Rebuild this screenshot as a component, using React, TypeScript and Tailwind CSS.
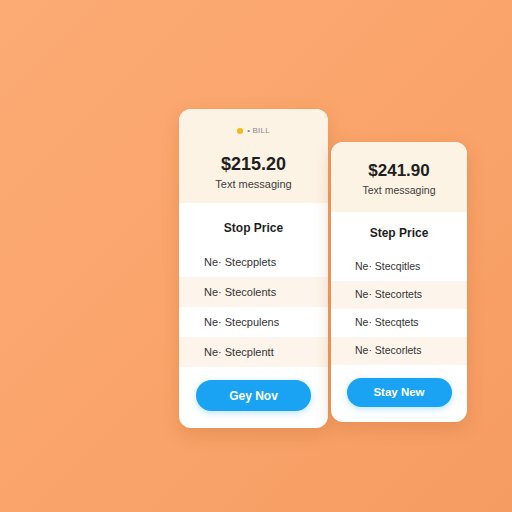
import React from 'react';

type Plan = {
  price: string;
  note: string;
  title: string;
  rows: string[];
  cta: string;
  badge?: boolean;
};

const plans: Plan[] = [
  {
    price: '$215.20',
    note: 'Text messaging',
    title: 'Stop Price',
    rows: ['Ne· Stecpplets', 'Ne· Stecolents', 'Ne· Stecpulens', 'Ne· Stecplentt'],
    cta: 'Gey Nov',
    badge: true,
  },
  {
    price: '$241.90',
    note: 'Text messaging',
    title: 'Step Price',
    rows: ['Ne· Stecqitles', 'Ne· Stecortets', 'Ne· Stecqtets', 'Ne· Stecorlets'],
    cta: 'Stay New',
  },
];

const PlanCard = ({ plan, big }: { plan: Plan; big: boolean }) => (
  <div
    className={`${big ? 'w-[149px]' : 'w-[136px] mt-[33px]'} bg-white rounded-[12px] overflow-hidden shadow-[0_6px_18px_rgba(170,80,20,0.22)]`}
  >
    <div className={`bg-[#fdf3e5] flex flex-col items-center ${big ? 'h-[94px] pt-[17px]' : 'h-[70px] pt-[18px]'}`}>
      {plan.badge && (
        <div className="flex items-center gap-[4px] h-[10px] mb-[17px]">
          <span className="w-[6px] h-[6px] rounded-full bg-[#f6b71c]" />
          <span className="text-[8px] leading-none text-[#8a8a8a] tracking-wide">• BILL</span>
        </div>
      )}
      <div className={`${big ? 'text-[18px]' : 'text-[17px]'} font-bold text-[#1f1f1f] leading-[22px]`}>
        {plan.price}
      </div>
      <div className={`${big ? 'text-[11px] mt-[2px]' : 'text-[10.5px] mt-[1px]'} text-[#3d3d3d] leading-[14px]`}>
        {plan.note}
      </div>
    </div>

    <div className={`text-center font-bold text-[12px] text-[#1f1f1f] ${big ? 'pt-[18px] pb-[12px]' : 'pt-[14px] pb-[13px]'} leading-[14px]`}>
      {plan.title}
    </div>

    <div className="flex flex-col">
      {plan.rows.map((row, i) => (
        <div
          key={i}
          className={`${big ? 'h-[30px] pl-[25px] text-[11px]' : 'h-[28px] pl-[24px] text-[10.5px]'} flex items-center text-[#333333] ${i % 2 === 1 ? 'bg-[#fdf5ec]' : 'bg-white'}`}
        >
          {row}
        </div>
      ))}
    </div>

    <div className={`flex justify-center ${big ? 'pt-[13px] pb-[17px]' : 'pt-[13px] pb-[15px]'}`}>
      <button
        className={`${big ? 'w-[115px] h-[31px] text-[12px]' : 'w-[105px] h-[29px] text-[11.5px]'} rounded-full bg-[#1aa3f3] text-white font-semibold shadow-[0_2px_6px_rgba(26,163,243,0.3)]`}
      >
        {plan.cta}
      </button>
    </div>
  </div>
);

export default function App() {
  return (
    <div
      className="w-[512px] h-[512px] overflow-hidden bg-gradient-to-br from-[#fcab74] via-[#faa46b] to-[#f59c62] flex items-start pl-[179px] pt-[109px] gap-[3px]"
      style={{ fontFamily: '"Liberation Sans", Arial, sans-serif' }}
    >
      {plans.map((p, i) => (
        <PlanCard key={i} plan={p} big={i === 0} />
      ))}
    </div>
  );
}
